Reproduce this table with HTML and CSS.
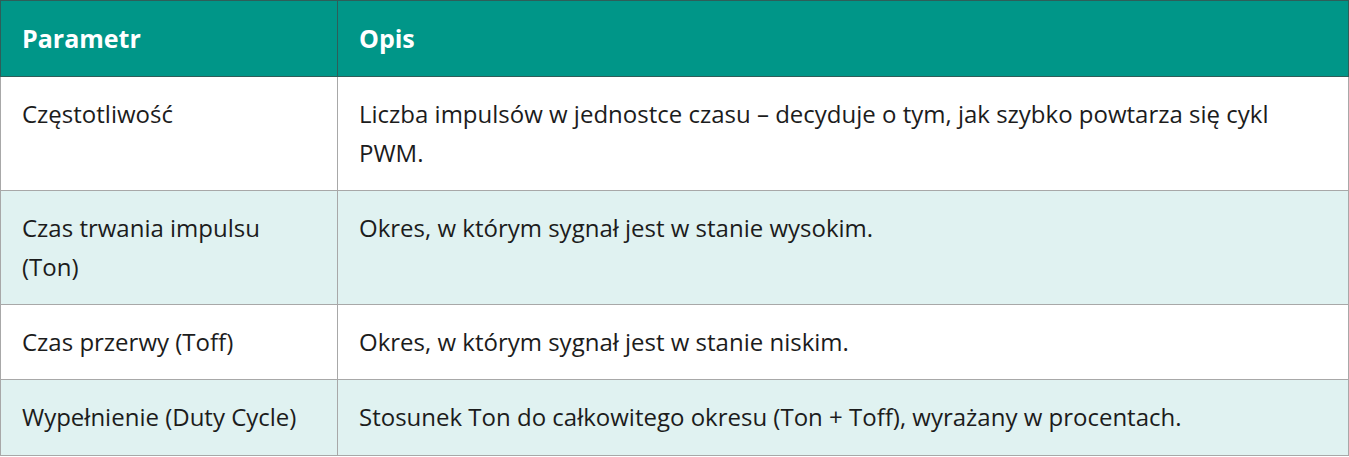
FILE: index.html
```html
<!DOCTYPE html>
<html lang="pl">
<head>
<meta charset="utf-8">
<title>PWM parametry</title>
<link rel="stylesheet" href="styles.css">
</head>
<body>
<table class="params">
  <thead>
    <tr>
      <th class="col-name">Parametr</th>
      <th>Opis</th>
    </tr>
  </thead>
  <tbody>
    <tr>
      <td>Częstotliwość</td>
      <td>Liczba impulsów w jednostce czasu – decyduje o tym, jak szybko powtarza się cykl PWM.</td>
    </tr>
    <tr>
      <td>Czas trwania impulsu (Ton)</td>
      <td>Okres, w którym sygnał jest w stanie wysokim.</td>
    </tr>
    <tr>
      <td>Czas przerwy (Toff)</td>
      <td>Okres, w którym sygnał jest w stanie niskim.</td>
    </tr>
    <tr>
      <td>Wypełnienie (Duty Cycle)</td>
      <td>Stosunek Ton do całkowitego okresu (Ton + Toff), wyrażany w procentach.</td>
    </tr>
  </tbody>
</table>
</body>
</html>
```

FILE: styles.css
```css
html, body {
  margin: 0;
  padding: 0;
  background: #ffffff;
}

body {
  font-family: "Open Sans", "Noto Sans", "Liberation Sans", sans-serif;
  color: #1c1c1c;
}

.params {
  width: 1349px;
  border-collapse: collapse;
  table-layout: fixed;
  font-size: 24px;
  line-height: 38.4px;
}

.params .col-name {
  width: 294px;
}

.params th {
  background: #009688;
  color: #ffffff;
  font-weight: 700;
  font-size: 25px;
  text-align: left;
  padding: 18px 21px 19px;
  border: 1px solid #2e5e59;
}

.params td {
  padding: 18px 21px;
  border: 1px solid #a8a8a8;
  vertical-align: top;
  text-align: left;
}

.params tbody tr:nth-child(even) td {
  background: #e0f2f1;
}
```
